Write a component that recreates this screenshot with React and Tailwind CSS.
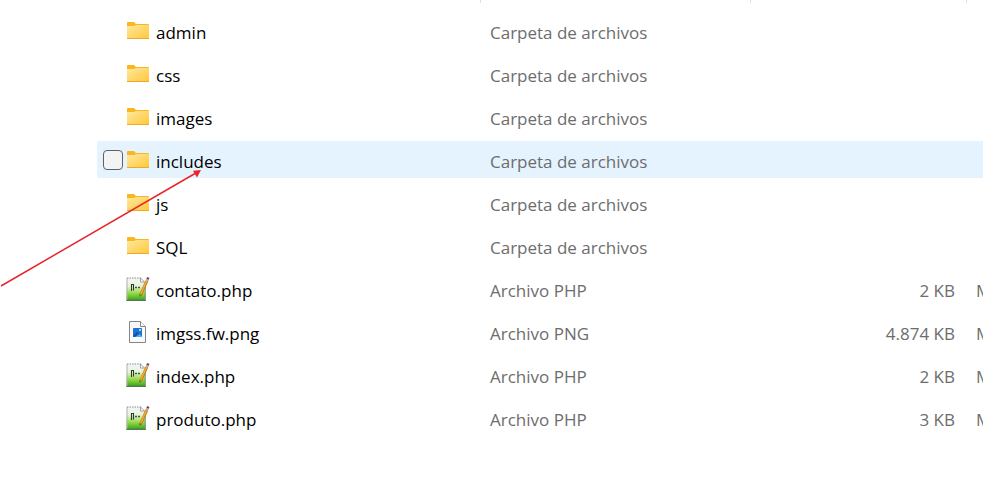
import React from 'react';

const files = [
  { name: 'admin', kind: 'folder', type: 'Carpeta de archivos' },
  { name: 'css', kind: 'folder', type: 'Carpeta de archivos' },
  { name: 'images', kind: 'folder', type: 'Carpeta de archivos' },
  { name: 'includes', kind: 'folder', type: 'Carpeta de archivos', hovered: true },
  { name: 'js', kind: 'folder', type: 'Carpeta de archivos' },
  { name: 'SQL', kind: 'folder', type: 'Carpeta de archivos' },
  { name: 'contato.php', kind: 'php', type: 'Archivo PHP', size: '2 KB', extra: 'M' },
  { name: 'imgss.fw.png', kind: 'png', type: 'Archivo PNG', size: '4.874 KB', extra: 'M' },
  { name: 'index.php', kind: 'php', type: 'Archivo PHP', size: '2 KB', extra: 'M' },
  { name: 'produto.php', kind: 'php', type: 'Archivo PHP', size: '3 KB', extra: 'M' },
];

const FolderIcon = () => (
  <svg width="24" height="25" viewBox="0 0 24 25" aria-hidden="true">
    <path d="M1 5Q1 4 2 4H7.500Q8.500 4 9 5L9.800 6H22Q23 6 23 7V10H1Z" fill="#f9b61f" />
    <path d="M1 8H8L10 7H23V21H1Z" fill="url(#folderFill)" />
    <path d="M1 20.500H23" stroke="#eca92b" />
  </svg>
);

const PhpIcon = () => (
  <svg width="24" height="25" viewBox="0 0 24 25" aria-hidden="true">
    <path d="M0.500 2H15L19.500 6V25H0.500Z" fill="url(#phpPaper)" />
    <path d="M1 24V2" stroke="#aeb5b5" />
    <path d="M1 2H15" stroke="#8b8f94" strokeDasharray="1.500 1" />
    <path d="M19.200 7V24" stroke="#75926f" />
    <path d="M0.500 24.300H20" stroke="#5e7058" strokeWidth="1" />
    <path d="M14.500 2V6H18.500Z" fill="#fff" stroke="#8b8f94" strokeWidth="0.800" />
    <path d="M5.500 15V8.500H7.500V14.500" fill="none" stroke="#33382f" strokeWidth="1.100" />
    <path d="M9 11.500H11M12 11.500H14" stroke="#4a5145" strokeWidth="1.600" />
    <path d="M20.800 5L14.800 18.500" stroke="#b9771b" strokeWidth="3" />
    <path d="M20.500 5L14.800 17.800" stroke="#f0a92c" strokeWidth="1.800" />
    <path d="M13.300 18L13.200 21L16 19.200Z" fill="#8a6a2c" />
    <path d="M22.300 1.500L21.500 3.500" stroke="#8f3340" strokeWidth="2.400" />
    <path d="M21.600 3.200L20.900 5" stroke="#a9adb5" strokeWidth="2.600" />
  </svg>
);

const PngIcon = () => (
  <svg width="24" height="25" viewBox="0 0 24 25" aria-hidden="true">
    <path d="M3.500 2.500H14.500L19.500 7.500V23.500H3.500Z" fill="#f9f9f9" stroke="#858585" />
    <path d="M14.500 2.500V7.500H19.500" fill="#fff" stroke="#858585" />
    <rect x="7" y="9" width="9" height="9" rx="1" fill="#1873d3" />
    <path d="M7 16.500L11 12.500L16 17.500Q15.500 18 15 18H8Q7 18 7 17Z" fill="#3fb4f2" />
    <path d="M7 16.500L11 12.500L13.500 15L9 18H8Q7 18 7 17Z" fill="#1c4fa8" />
    <rect x="13" y="10" width="2" height="2" rx="1" fill="#d9f1ff" />
  </svg>
);

const icons = { folder: FolderIcon, php: PhpIcon, png: PngIcon };

const FileRow = ({ file }) => {
  const Icon = icons[file.kind];
  const cell = file.hovered ? 'flex h-[37px] items-center bg-[#e5f3ff]' : 'flex h-[37px] items-center';

  return (
    <tr>
      <td className="p-0 py-[3px]">
        <div className={`${cell} rounded-l-xs pl-1.5`}>
          <div className="flex w-5 shrink-0 items-center">
            {file.hovered && (
              <input
                type="checkbox"
                aria-label={file.name}
                className="h-5 w-5 appearance-none rounded-[4px] border border-[#5f6265] bg-[#f3f3f3]"
              />
            )}
          </div>
          <div className="ml-[3px] shrink-0">
            <Icon />
          </div>
          <span className="ml-1.5 pt-[5px] text-black">{file.name}</span>
        </div>
      </td>
      <td className="p-0 py-[3px]">
        <div className={`${cell} pt-[5px] pl-[9px]`}>{file.type}</div>
      </td>
      <td className="p-0 py-[3px]">
        <div className={`${cell} justify-end pt-[5px] pr-3`}>{file.size}</div>
      </td>
      <td className="p-0 py-[3px]">
        <div className={`${cell} overflow-hidden pt-[5px] pl-[9px]`}>{file.extra}</div>
      </td>
    </tr>
  );
};

const ColumnEdge = () => (
  <th className="h-[9px] p-0 align-top">
    <div className="h-[3px] border-r border-[#e0e0e0]" />
  </th>
);

const App = () => {
  return (
    <main className="relative min-h-screen overflow-hidden bg-white pl-[97px] font-['Open_Sans',sans-serif] text-[17px] leading-6 text-[#6d6d6d]">
      {/* Shared icon gradients */}
      <svg className="absolute h-0 w-0" aria-hidden="true">
        <defs>
          <linearGradient id="folderFill" x1="0" y1="0" x2="1" y2="1">
            <stop offset="0" stopColor="#ffe8a0" />
            <stop offset="1" stopColor="#ffc737" />
          </linearGradient>
          <linearGradient id="phpPaper" x1="0" y1="0" x2="0" y2="1">
            <stop offset="0" stopColor="#f3f6f5" />
            <stop offset="0.35" stopColor="#e6f3da" />
            <stop offset="0.7" stopColor="#8ad63a" />
            <stop offset="1" stopColor="#2f9a26" />
          </linearGradient>
        </defs>
      </svg>

      <table className="w-full table-fixed border-collapse text-left">
        <colgroup>
          <col className="w-[384px]" />
          <col className="w-[270px]" />
          <col className="w-[216px]" />
          <col />
        </colgroup>
        <thead>
          <tr>
            <ColumnEdge />
            <ColumnEdge />
            <ColumnEdge />
            <th className="p-0" />
          </tr>
        </thead>
        <tbody>
          {files.map((file) => (
            <FileRow key={file.name} file={file} />
          ))}
        </tbody>
      </table>

      {/* Arrow pointing at the includes folder */}
      <svg
        className="pointer-events-none absolute top-40 left-0"
        width="210"
        height="130"
        viewBox="0 160 210 130"
        aria-hidden="true"
      >
        <path d="M1 286L195 173.500" stroke="#e8262a" strokeWidth="1.500" />
        <path d="M201 170L197 177.500L193 170.800Z" fill="#e8262a" />
      </svg>
    </main>
  );
};

export default App;
